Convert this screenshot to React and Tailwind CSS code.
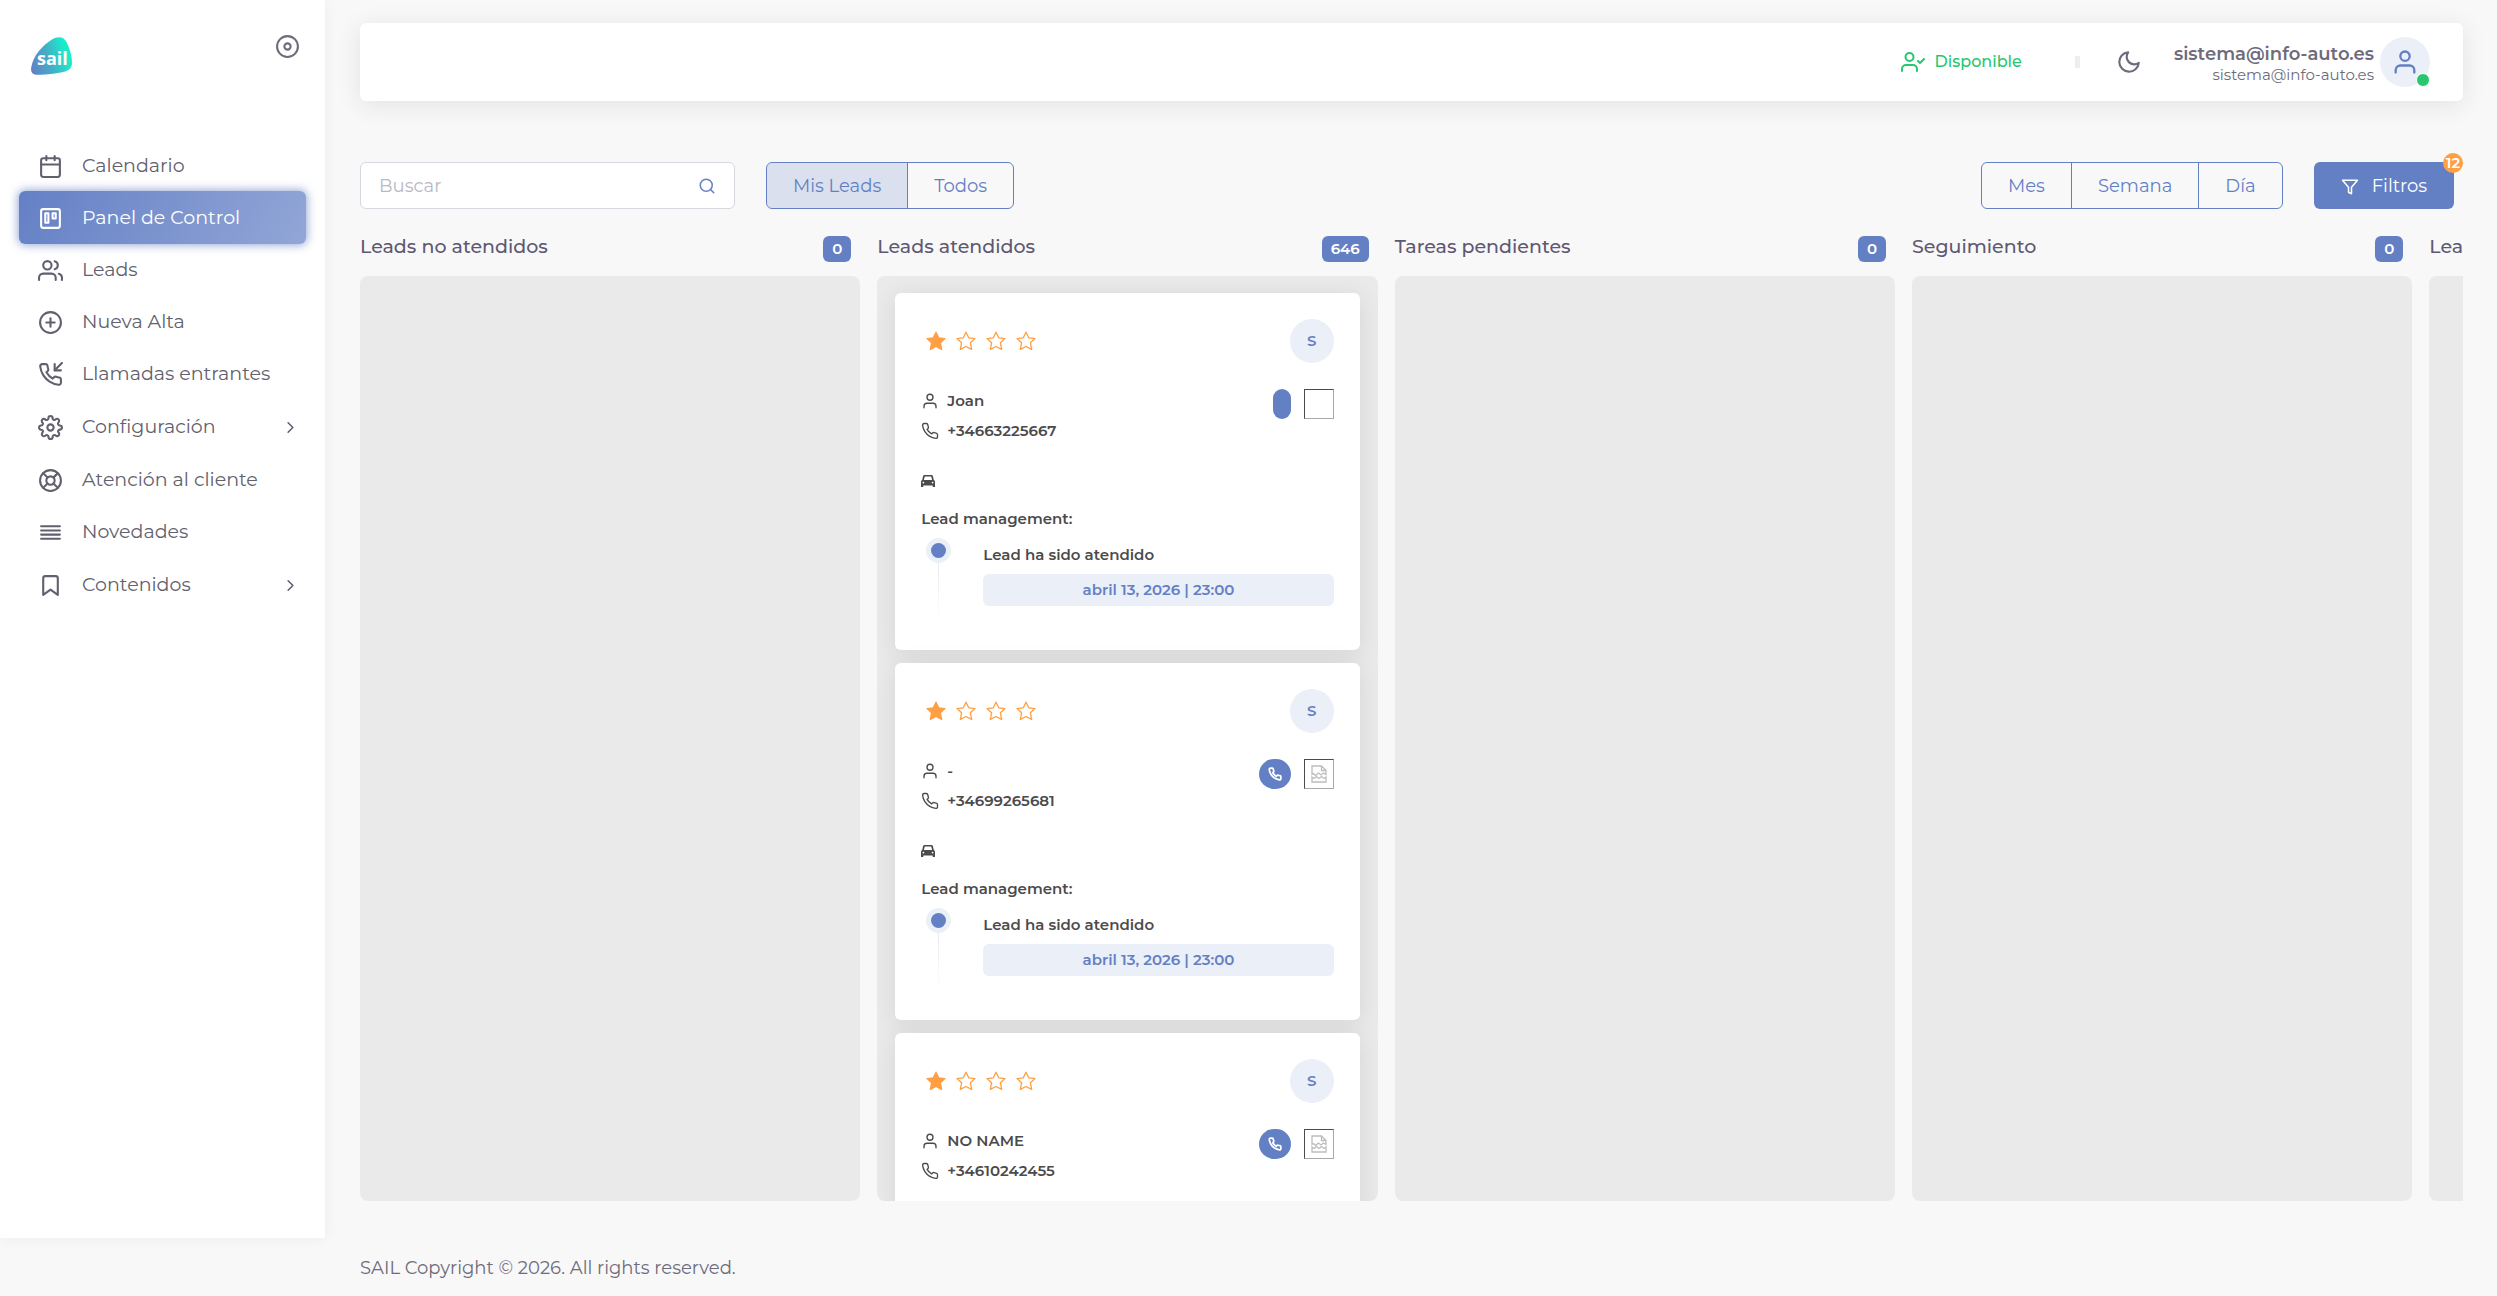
import {
  FiAlignJustify,
  FiBookmark,
  FiCalendar,
  FiChevronRight,
  FiDisc,
  FiFilter,
  FiLifeBuoy,
  FiMoon,
  FiPhone,
  FiPhoneIncoming,
  FiPlusCircle,
  FiSearch,
  FiSettings,
  FiTrello,
  FiUser,
  FiUserCheck,
  FiUsers,
} from 'react-icons/fi';

const navLinks = [
  { label: 'Calendario', icon: FiCalendar },
  { label: 'Panel de Control', icon: FiTrello, active: true },
  { label: 'Leads', icon: FiUsers },
  { label: 'Nueva Alta', icon: FiPlusCircle },
  { label: 'Llamadas entrantes', icon: FiPhoneIncoming },
  { label: 'Configuración', icon: FiSettings, submenu: true },
  { label: 'Atención al cliente', icon: FiLifeBuoy },
  { label: 'Novedades', icon: FiAlignJustify },
  { label: 'Contenidos', icon: FiBookmark, submenu: true },
];

const leads = [
  { id: 1, name: 'Joan', phone: '+34663225667', rating: 1, called: false },
  { id: 2, name: '-', phone: '+34699265681', rating: 1, called: true },
  { id: 3, name: 'NO NAME', phone: '+34610242455', rating: 1, called: true },
];

const columns = [
  { title: 'Leads no atendidos', count: 0, leads: [] },
  { title: 'Leads atendidos', count: 646, leads },
  { title: 'Tareas pendientes', count: 0, leads: [] },
  { title: 'Seguimiento', count: 0, leads: [] },
  { title: 'Leads cerrados', count: 0, leads: [] },
];

const Logo = () => (
  <svg width="41" height="38" viewBox="0 0 41 38" role="img" aria-label="sail">
    <defs>
      <linearGradient id="sail" x1="0" y1="0.8" x2="1" y2="0.5">
        <stop offset="0" stopColor="#6480c5" />
        <stop offset="0.5" stopColor="#3fb3c8" />
        <stop offset="0.9" stopColor="#19eccb" />
      </linearGradient>
    </defs>
    <path
      d="M21 2.500C27 -1 33 -0.800 36 6C39.500 13 41 20 41 26C41 32 37 34 31 35.300C23 37.200 13 38 6 37.700C1.500 37.500 -0.500 35 0.200 30.500C2.500 18 11 9 21 2.500Z"
      fill="url(#sail)"
    />
    <text x="6" y="28" fill="#fff" fontSize="18" fontWeight="700" fontFamily='"Open Sans", sans-serif'>
      sail
    </text>
  </svg>
);

const Star = ({ filled }) => (
  <svg width="20" height="20" viewBox="0 0 20 20" aria-hidden="true">
    <path
      d="M10 1.200L12.700 6.800L19 7.600L14.400 11.800L15.700 18.400L10 15.500L4.300 18.400L5.600 11.800L1 7.600L7.300 6.800Z"
      fill={filled ? '#ff9f43' : '#fff'}
      stroke="#ff9f43"
      strokeWidth="1.3"
      strokeLinejoin="round"
    />
  </svg>
);

const CarIcon = () => (
  <svg width="14" height="12" viewBox="0 0 14 12" aria-hidden="true">
    <path
      fill="#4b4b4b"
      fillRule="evenodd"
      d="M3.500 0H10.500Q11.600 0 11.900 1L12.800 5Q14 5.500 14 6.800V11.400Q14 12 13.400 12H12.300Q11.700 12 11.700 11.400V10.600H2.300V11.400Q2.300 12 1.700 12H0.600Q0 12 0 11.400V6.800Q0 5.500 1.200 5L2.100 1Q2.400 0 3.500 0ZM3.800 1.400L2.900 5H11.100L10.200 1.400ZM2.400 6.700A0.900 0.900 0 1 0 2.400 8.500A0.900 0.900 0 1 0 2.400 6.700ZM11.600 6.700A0.900 0.900 0 1 0 11.600 8.500A0.900 0.900 0 1 0 11.600 6.700Z"
    />
  </svg>
);

const BrokenImage = () => (
  <svg width="16" height="18" viewBox="0 0 16 18" fill="none" stroke="#bdbdbd" strokeWidth="1.3" aria-hidden="true">
    <path d="M1 9.500V1H10.500L15 5.500V9.500L12.500 8L10 10L7.500 8L4.500 10.500L2.500 8.500Z" />
    <path d="M10.500 1V5.500H15" />
    <path d="M1 17V12L3 13.500L5.500 11.500L8 13.500L10.500 11.500L13 13.500L15 12V17Z" />
  </svg>
);

const Sidebar = () => (
  <aside className="w-[325px] shrink-0 self-start h-[calc(100vh-58px)] bg-white shadow-[0_0_15px_0_rgba(34,41,47,0.05)]">
    <div className="flex justify-between items-start pl-[31px] pr-[25px] pt-[34px] h-[139px]">
      <a href="#inicio" className="pt-[3px]">
        <Logo />
      </a>
      <button type="button" aria-label="Fijar menú" className="text-[#6e6b7b]">
        <FiDisc size={25} />
      </button>
    </div>
    <nav className="flex flex-col px-[19px]">
      {navLinks.map(({ label, icon: Icon, active, submenu }) => (
        <a
          key={label}
          href="#menu"
          className={`flex items-center gap-[19px] pl-[19px] pr-[6px] pt-[2px] text-[19px] rounded-md ${
            submenu ? 'h-[54px]' : 'h-[53px] -mb-px'
          } ${
            active
              ? 'text-white bg-[linear-gradient(118deg,#6480c5,rgba(100,128,197,0.7))] shadow-[0_0_10px_1px_rgba(100,128,197,0.7)]'
              : 'text-[#625f6e]'
          }`}
        >
          <Icon size={25} />
          <span className="flex-1">{label}</span>
          {submenu && <FiChevronRight size={19} />}
        </a>
      ))}
    </nav>
  </aside>
);

const Navbar = () => (
  <header className="flex items-center justify-end h-[78px] pr-[33px] bg-white rounded-md shadow-[0_4px_24px_0_rgba(34,41,47,0.1)] text-[#6e6b7b]">
    <button type="button" className="flex items-center gap-[10px] text-[#28c76f] text-[16px] font-medium">
      <FiUserCheck size={24} />
      Disponible
    </button>
    <span className="w-[5px] h-3 ml-[53px] mr-9 bg-[#eee]" />
    <button type="button" aria-label="Modo oscuro">
      <FiMoon size={26} />
    </button>
    <div className="flex flex-col items-end ml-8 mr-[6px] pt-1">
      <span className="text-[18px] leading-[22px] font-semibold">sistema@info-auto.es</span>
      <span className="text-[15px] leading-5">sistema@info-auto.es</span>
    </div>
    <div className="relative flex items-center justify-center size-[50px] rounded-full bg-[#ebeff8] text-[#6480c5]">
      <FiUser size={28} />
      <span className="absolute bottom-0 right-0 size-[14px] rounded-full bg-[#28c76f] border border-white" />
    </div>
  </header>
);

const ButtonGroup = ({ options, selected }) => (
  <div className="flex h-[47px] rounded-md border border-[#6480c5] divide-x divide-[#6480c5] overflow-hidden">
    {options.map((option) => (
      <button
        key={option}
        type="button"
        className={`px-[26px] pt-[2px] text-[18px] text-[#6480c5] ${option === selected ? 'bg-[#6480c5]/20' : ''}`}
      >
        {option}
      </button>
    ))}
  </div>
);

const Toolbar = () => (
  <div className="flex justify-between mt-[61px] mr-[9px]">
    <div className="flex gap-[31px]">
      <label className="flex items-center w-[375px] h-[47px] pl-[18px] pr-[18px] bg-white border border-[#d8d6de] rounded-md">
        <input
          type="text"
          placeholder="Buscar"
          aria-label="Buscar"
          className="flex-1 min-w-0 pt-[2px] outline-none text-[18px] text-[#6e6b7b] placeholder:text-[#b9b9c3]"
        />
        <FiSearch size={18} className="text-[#6480c5]" />
      </label>
      <ButtonGroup options={['Mis Leads', 'Todos']} selected="Mis Leads" />
    </div>
    <div className="flex gap-[31px]">
      <ButtonGroup options={['Mes', 'Semana', 'Día']} />
      <button
        type="button"
        className="relative flex items-center gap-[13px] h-[47px] px-[27px] pt-[2px] rounded-md bg-[#6480c5] text-white text-[18px]"
      >
        <FiFilter size={18} />
        Filtros
        <span className="absolute -top-[9px] -right-[9px] flex items-center justify-center size-5 rounded-full bg-[#ff9f43] text-[15px] leading-5 font-semibold">
          12
        </span>
      </button>
    </div>
  </div>
);

const LeadCard = ({ lead }) => (
  <article className="p-[26px] bg-white rounded-md text-[15px] font-semibold text-[#4b4b4b] shadow-[0_4px_24px_0_rgba(34,41,47,0.1)]">
    <div className="flex items-center justify-between">
      <div className="flex gap-[10px] pl-[5px]">
        {[1, 2, 3, 4].map((n) => (
          <Star key={n} filled={n <= lead.rating} />
        ))}
      </div>
      <span className="flex items-center justify-center size-11 rounded-full bg-[#ebeff8] text-[#6480c5]">S</span>
    </div>

    <div className="flex items-start justify-between mt-6">
      <div className="flex flex-col gap-[2px]">
        <span className="flex items-center gap-2 h-7">
          <FiUser size={18} strokeWidth={1.8} />
          {lead.name}
        </span>
        <span className="flex items-center gap-2 h-7">
          <FiPhone size={18} strokeWidth={1.8} />
          {lead.phone}
        </span>
      </div>
      <div className="flex gap-[13px] pt-[2px]">
        <span className="flex items-center h-[30px] px-[9px] rounded-full bg-[#6480c5] text-white">
          {lead.called && <FiPhone size={14} strokeWidth={3} />}
        </span>
        <span className="flex items-center justify-center size-[30px] border border-t-[#4b4b4b] border-l-[#4b4b4b] border-r-[#a9a9a9] border-b-[#a9a9a9]">
          {lead.called && <BrokenImage />}
        </span>
      </div>
    </div>

    <div className="flex items-center h-5 mt-[26px]">
      <CarIcon />
    </div>
    <p className="mt-4 leading-6">Lead management:</p>

    {/* Timeline */}
    <div className="flex gap-8 mt-[7px] pl-[5px]">
      <div className="flex flex-col items-center w-[25px]">
        <span className="flex items-center justify-center size-[25px] rounded-full bg-[#ebeff8]">
          <span className="size-[15px] rounded-full bg-[#6480c5]" />
        </span>
        <span className="flex-1 w-px bg-linear-to-b from-[#ebe9f1] to-white" />
      </div>
      <div className="flex-1 pt-[5px] pb-[18px]">
        <p className="leading-6">Lead ha sido atendido</p>
        <p className="mt-[7px] h-8 leading-8 text-center rounded-md bg-[#ebeff8] text-[#6480c5]">
          abril 13, 2026 | 23:00
        </p>
      </div>
    </div>
  </article>
);

const Column = ({ column }) => (
  <section className="flex flex-col shrink-0 w-[24.6%] pr-[17px] min-h-0">
    <div className="flex items-start justify-between pt-[27px] pb-[14px] pr-[9px]">
      <h2 className="text-[19px] leading-[22px] font-medium text-[#5e5873] whitespace-nowrap">{column.title}</h2>
      <span className="h-[26px] px-[9px] rounded-md bg-[#6480c5] text-white text-[15px] leading-[25px] font-semibold">
        {column.count}
      </span>
    </div>
    <div className="flex flex-col gap-[13px] flex-1 min-h-0 px-[18px] py-[17px] rounded-lg bg-[#eaeaea] overflow-hidden">
      {column.leads.map((lead) => (
        <LeadCard key={lead.id} lead={lead} />
      ))}
    </div>
  </section>
);

const App = () => (
  <div className="flex h-screen bg-[#f8f8f8] font-['Montserrat',Inter,sans-serif]">
    <Sidebar />
    <main className="flex flex-col flex-1 min-w-0 pt-[23px] pl-[35px] pr-[34px]">
      <Navbar />
      <Toolbar />
      <div className="flex flex-1 min-h-0 overflow-hidden">
        {columns.map((column) => (
          <Column key={column.title} column={column} />
        ))}
      </div>
      <footer className="h-[95px] pt-[55px] text-[18px] leading-6 text-[#6e6b7b]">
        SAIL Copyright © 2026. All rights reserved.
      </footer>
    </main>
  </div>
);

export default App;
